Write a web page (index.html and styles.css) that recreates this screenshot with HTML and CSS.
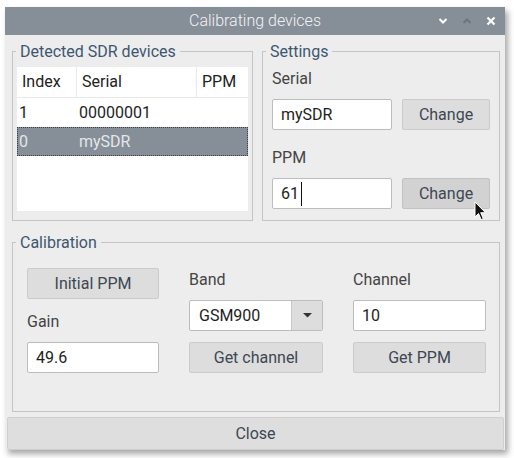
FILE: index.html
```html
<!DOCTYPE html>
<html>
<head>
<meta charset="utf-8">
<title>Calibrating devices</title>
<link rel="stylesheet" href="styles.css">
</head>
<body>
<div class="window">
  <div class="titlebar">
    <span class="title">Calibrating devices</span>
    <div class="controls">
      <svg class="ctl" width="10" height="10" viewBox="0 0 10 10"><polyline points="1.5,3 5,6.5 8.5,3" fill="none" stroke="#ffffff" stroke-width="2"/></svg>
      <svg class="ctl" width="10" height="10" viewBox="0 0 10 10"><polyline points="1.5,7 5,3.5 8.5,7" fill="none" stroke="#6c747d" stroke-width="2"/></svg>
      <svg class="ctl" width="10" height="10" viewBox="0 0 10 10"><path d="M1.5,1.5 L8.5,8.5 M8.5,1.5 L1.5,8.5" fill="none" stroke="#ffffff" stroke-width="2.2"/></svg>
    </div>
  </div>
  <div class="content">
    <div class="top-row">
      <fieldset class="group devices">
        <legend>Detected SDR devices</legend>
        <div class="table">
          <div class="th">Index</div>
          <div class="th">Serial</div>
          <div class="th last">PPM</div>
          <div class="td">1</div>
          <div class="td">00000001</div>
          <div class="td"></div>
          <div class="row-selected">
            <div class="td sel">0</div>
            <div class="td sel">mySDR</div>
            <div class="td sel"></div>
          </div>
        </div>
      </fieldset>
      <fieldset class="group settings">
        <legend>Settings</legend>
        <div class="settings-grid">
          <div class="label span">Serial</div>
          <div class="input">mySDR</div>
          <button class="btn">Change</button>
          <div class="label span second">PPM</div>
          <div class="input">61<span class="caret"></span></div>
          <button class="btn hover">Change</button>
        </div>
      </fieldset>
    </div>
    <fieldset class="group calibration">
      <legend>Calibration</legend>
      <div class="calib-grid">
        <div class="col">
          <button class="btn">Initial PPM</button>
          <div class="label gain">Gain</div>
          <div class="input">49.6</div>
        </div>
        <div class="col">
          <div class="label">Band</div>
          <div class="combo">
            <span class="combo-text">GSM900</span>
            <span class="combo-arrow"><svg width="9" height="5" viewBox="0 0 9 5"><polygon points="0,0 9,0 4.5,4.5" fill="#333333"/></svg></span>
          </div>
          <button class="btn">Get channel</button>
        </div>
        <div class="col">
          <div class="label">Channel</div>
          <div class="input">10</div>
          <button class="btn">Get PPM</button>
        </div>
      </div>
    </fieldset>
  </div>
  <button class="btn close">Close</button>
</div>
<svg class="pointer" width="13" height="21" viewBox="0 0 13 21"><path d="M1,1 L1,16 L4.5,12.5 L7.2,18.6 L9.3,17.7 L6.7,11.7 L11.5,11.7 Z" fill="#111111" stroke="#ffffff" stroke-width="1" stroke-linejoin="round"/></svg>
</body>
</html>
```
FILE: styles.css
```css
* { box-sizing: border-box; }
html, body { margin: 0; padding: 0; }
body {
  background: #ffffff;
  font-family: Roboto, "Liberation Sans", sans-serif;
  font-size: 16px;
  color: #222222;
  width: 514px;
  height: 458px;
  overflow: hidden;
  position: relative;
}
.window {
  margin: 7px 0 0 5px;
  width: 500px;
  height: 443px;
  background: #ededed;
  box-shadow: 3px 4px 6px rgba(0, 0, 0, 0.35);
  display: flex;
  flex-direction: column;
}
.titlebar {
  height: 28px;
  flex: none;
  background: #868e98;
  display: grid;
  grid-template-columns: 1fr auto 1fr;
  align-items: center;
}
.title {
  grid-column: 2;
  color: #f3f3f3;
  font-weight: 300;
  line-height: 28px;
}
.controls {
  grid-column: 3;
  justify-self: end;
  display: flex;
  gap: 14px;
  padding-right: 9px;
  align-items: center;
}
.ctl { display: block; }
.content {
  padding: 7px 5px 0 7px;
  display: flex;
  flex-direction: column;
  gap: 12px;
}
.top-row { display: flex; gap: 9px; }
fieldset.group {
  margin: 0;
  border: 1px solid #c4c4c4;
  height: 179px;
  padding: 0;
  min-width: 0;
}
legend {
  padding: 0 4px;
  margin-left: 3px;
  line-height: 19px;
  color: #3d5670;
}
.devices { width: 241px; flex: none; }
.settings { flex: 1; }

.table {
  margin: 6px 4px 0 4px;
  background: #ffffff;
  height: 144px;
  display: grid;
  grid-template-columns: 60px 120px 1fr;
  grid-template-rows: 31px 29px 29px;
  align-content: start;
}
.th {
  line-height: 30px;
  padding-left: 5px;
  color: #222222;
  border-right: 1px solid #e9e9e9;
  border-bottom: 1px solid #e9e9e9;
}
.th.last { border-right: none; }
.td { line-height: 29px; padding-left: 2px; color: #1e1e1e; }
.row-selected {
  grid-column: 1 / -1;
  display: grid;
  grid-template-columns: 60px 120px 1fr;
  background: #868e98;
  outline: 1px dotted #3a3f45;
  outline-offset: -1px;
}
.td.sel { color: #e4e6e8; line-height: 29px; }

.settings-grid {
  padding: 8px 9px 0 9px;
  display: grid;
  grid-template-columns: 120px 88px;
  column-gap: 10px;
}
.label { line-height: 19px; color: #444444; }
.span { grid-column: 1 / -1; margin-bottom: 11px; }
.second { margin-top: 18px; }
.input {
  height: 31px;
  background: #ffffff;
  border: 1px solid #bdbdbd;
  border-radius: 2px;
  padding: 0 8px;
  line-height: 29px;
  color: #1e1e1e;
  display: flex;
  align-items: center;
}
.caret {
  display: inline-block;
  width: 1px;
  height: 24px;
  background: #111111;
  margin-left: 2px;
}
.btn {
  height: 31px;
  background: #dddddd;
  border: 1px solid #cbcbcb;
  border-radius: 2px;
  font-family: Roboto, "Liberation Sans", sans-serif;
  font-size: 16px;
  color: #3c4752;
  padding: 0;
}
.btn.hover { background: #d2d2d2; border-color: #c2c2c2; }

.calib-grid {
  padding: 16px 14px 0 14px;
  display: grid;
  grid-template-columns: 132px 134px 133px;
  column-gap: 30px;
  align-items: end;
}
.col { display: flex; flex-direction: column; }
.col > .label { margin-bottom: 11px; }
.col > .combo, .col > .input { margin-bottom: 11px; }
.col .label.gain { margin-top: 13px; }
.col:first-child > .input { margin-bottom: 0; }
.combo {
  height: 31px;
  display: flex;
  border: 1px solid #bdbdbd;
  border-radius: 2px;
  background: #ffffff;
  overflow: hidden;
}
.combo-text { flex: 1; padding-left: 9px; line-height: 29px; color: #1e1e1e; }
.combo-arrow {
  width: 31px;
  background: #dddddd;
  border-left: 1px solid #c8c8c8;
  display: flex;
  align-items: center;
  justify-content: center;
}
.close {
  margin: 5px 1px 0 2px;
  height: 33px;
  background: #dedede;
  border-color: #cfcfcf;
}
.pointer {
  position: absolute;
  left: 474px;
  top: 201px;
}
```
